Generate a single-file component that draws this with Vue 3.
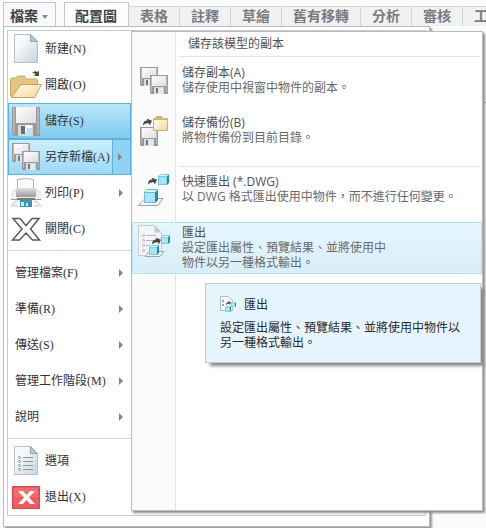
<template>
  <div class="page">
    <nav class="tabs">
      <button type="button" class="tab file-tab">檔案<span class="caret"></span></button>
      <button type="button" class="tab active-tab">配置圖</button>
      <button v-for="tab in tabs" :key="tab" type="button" class="tab">{{ tab }}</button>
    </nav>

    <div class="file-menu">
      <div class="menu-frame">
        <div class="main-menu">
          <template v-for="(group, index) in groups" :key="index">
            <hr v-if="index" class="menu-line" />
            <button
              v-for="item in group"
              :key="item.label"
              type="button"
              class="menu-item"
              :class="[item.state, { plain: !item.icon }]"
            >
              <svg v-if="item.icon" class="menu-icon" viewBox="0 0 32 32" aria-hidden="true">
                <use :href="'#' + item.icon" />
              </svg>
              <span class="menu-label">{{ item.label }}</span>
              <span v-if="item.more" class="more"><span class="arrow"></span></span>
            </button>
          </template>
        </div>
      </div>
    </div>

    <div class="side-panel"></div>

    <section class="submenu">
      <h2 class="submenu-title">儲存該模型的副本</h2>
      <button
        v-for="item in saveItems"
        :key="item.title"
        type="button"
        class="save-item"
        :class="item.state"
      >
        <svg class="save-icon" viewBox="0 0 32 32" aria-hidden="true"><use :href="'#' + item.icon" /></svg>
        <span class="save-text">
          <span class="save-title">{{ item.title }}</span>
          <span class="save-desc">{{ item.desc }}</span>
        </span>
      </button>
    </section>

    <div class="tooltip" role="tooltip">
      <div class="tooltip-head">
        <svg class="tooltip-icon" viewBox="0 0 16 16" aria-hidden="true"><use href="#export-small" /></svg>
        <span>匯出</span>
      </div>
      <p>設定匯出屬性、預覽結果、並將使用中物件以另一種格式輸出。</p>
    </div>

    <svg class="symbols" aria-hidden="true">
      <defs>
        <linearGradient id="paper" x1="0" y1="0" x2="1" y2="1">
          <stop offset="0.3" stop-color="#f7f9fa" /><stop offset="1" stop-color="#bfd5df" />
        </linearGradient>
        <linearGradient id="gold" x1="0" y1="0" x2="1" y2="1">
          <stop offset="0" stop-color="#fffdf3" /><stop offset="1" stop-color="#f4d794" />
        </linearGradient>
        <linearGradient id="steel" x1="0" y1="0" x2="0" y2="1">
          <stop offset="0" stop-color="#e2e2e2" /><stop offset="1" stop-color="#999" />
        </linearGradient>
        <linearGradient id="white" x1="0" y1="0" x2="1" y2="1">
          <stop offset="0" stop-color="#fff" /><stop offset="1" stop-color="#dedede" />
        </linearGradient>
      </defs>
      <symbol id="page" viewBox="0 0 32 32">
        <path d="M4.500 1.500h16l7 7v21h-23z" fill="url(#paper)" stroke="#b4c1c7" />
        <path d="M20.500 1.500v7h7z" fill="#b4c9d2" stroke="#90a5af" />
      </symbol>
      <symbol id="arrow" viewBox="0 0 10 8">
        <path d="M0 8C0 4 2 2 5 2.500L4 0l6 2.500L7.500 8 6.500 5.500C4 5 2 6 0 8z" fill="#484848" />
      </symbol>
      <symbol id="floppy" viewBox="0 0 28 29">
        <path d="M0 0h28v29H2l-2-2z" fill="#9a9a9a" />
        <path d="M1 1h2v26H1zM25 1h2v26h-2z" fill="#b3b3b3" />
        <path d="M4 0h20v16H4z" fill="url(#white)" />
        <path d="M6 18h15v11H6z" fill="#d9d9d9" />
        <path d="M9 19h4v8H9z" fill="#6b6b6b" />
        <path d="M13 18h7v10h-7z" fill="#f3fbff" />
        <path d="M15 21h5v7h-7z" fill="#bfe3f1" />
      </symbol>
      <symbol id="floppy-small" viewBox="0 0 18 19">
        <path d="M0 0h18v19H1l-1-1z" fill="#999" />
        <path d="M1 1h1v16H1zM16 1h1v16h-1z" fill="#bbb" />
        <path d="M2 1h14v10H2z" fill="url(#white)" />
        <path d="M4 12h10v7H4z" fill="#dcdcdc" />
        <path d="M6 13h2v5H6z" fill="#777" />
        <path d="M8 13h5v6H8z" fill="#d3edf7" />
      </symbol>
      <symbol id="folder" viewBox="0 0 32 32">
        <path d="M22 4q3-3 5-1l2-1v5h-5l1.500-2q-1-1-3.500-1z" fill="#484848" />
        <path d="M.5 27V11q0-2 2-2h3l2-2h7l2 3h9q2 0 2 2v7L9 28z" fill="#e4c584" stroke="#cba65d" />
        <path d="M11 15.500h20.500l-7 13H1.500z" fill="url(#gold)" stroke="#c7a158" />
      </symbol>
      <symbol id="save" viewBox="0 0 32 32"><use href="#floppy" x="2" y="2" width="28" height="29" /></symbol>
      <symbol id="copy" viewBox="0 0 32 32">
        <use href="#floppy-small" x="2" y="2" width="18" height="19" />
        <use href="#floppy-small" x="12" y="10" width="18" height="19" />
      </symbol>
      <symbol id="printer" viewBox="0 0 32 32">
        <path d="M7.500 2.500q8-2 16 0v11h-16z" fill="#fafafa" stroke="#b0b0b0" />
        <path d="M1 15l5-4h20l5 4v6H1z" fill="#e9e9e9" />
        <path d="M6 11h20v9H6z" fill="url(#steel)" />
        <path d="M1 15h5v5h20v-5h5v8H1z" fill="#f0f0f0" />
        <path d="M1 22h30v1H1z" fill="#999" />
        <path d="M7 21h18v2H7z" fill="#777" />
        <path d="M1 29l4-5h22l4 5z" fill="#f2f2f2" stroke="#ccc" />
        <path d="M8 23h16v8H8z" fill="#f9ffff" />
        <path d="M10 23h12v7H10z" fill="#3696b4" />
        <path d="M11 25h3v4h-3zM16 26h2v3h-2z" fill="#c4edf5" />
      </symbol>
      <symbol id="close" viewBox="0 0 32 32">
        <path d="M3 5.500h7l6 7 6-7h7L20.500 16 29.500 27h-7L16 20l-6.500 7h-7L12 16z" fill="#fff" stroke="#5c5c56" stroke-width="1.500" />
      </symbol>
      <symbol id="options" viewBox="0 0 32 32">
        <use href="#page" width="32" height="32" />
        <path d="M13 12.500h10M13 16.500h10M13 20.500h10M13 24.500h10" stroke="#8d989e" />
        <g fill="#fff" stroke="#829098">
          <circle cx="9.500" cy="12.500" r="1" /><circle cx="9.500" cy="16.500" r="1" />
          <circle cx="9.500" cy="20.500" r="1" /><circle cx="9.500" cy="24.500" r="1" />
        </g>
      </symbol>
      <symbol id="exit" viewBox="0 0 32 32">
        <path d="M2.500 5.500h27v22h-27z" fill="#f3595c" stroke="#c94b50" />
        <path d="M4 7h24v9H4z" fill="#f76b6d" />
        <path d="M8 10h5l3.500 4 3.500-4h5l-6 6.500L25 23h-5l-3.500-4-3.500 4H8l6-6.500z" fill="#fff" />
      </symbol>
      <symbol id="backup" viewBox="0 0 32 32">
        <use href="#floppy-small" x="2" y="12" width="18" height="19" />
        <use href="#arrow" x="5" y="3" width="9" height="8" />
        <path d="M15.500 15.500v-12h2l1-2h5l1 2h5v12z" fill="#d9b575" stroke="#cfb077" />
        <path d="M16 5h13v10H16z" fill="url(#gold)" />
      </symbol>
      <symbol id="cube" viewBox="0 0 14 14">
        <path d="M0 3l3-3h11v11l-3 3H0z" fill="#62bfdf" />
        <path d="M11 4l3-3v10l-3 3z" fill="#2187ac" />
        <path d="M1 4h10v9H1z" fill="#a6e6fb" />
        <path d="M1 3l2-2h10l-2 2z" fill="#d9f7ff" />
      </symbol>
      <symbol id="quick" viewBox="0 0 32 32">
        <path d="M.5 31.500L7 24.500h18l-5 7z" fill="#f8f8f8" stroke="#a0a0a0" />
        <use href="#cube" x="6" y="15" width="14" height="14" />
        <use href="#cube" x="20" y="0" width="11" height="11" />
        <use href="#arrow" x="10" y="3" width="9" height="8" />
      </symbol>
      <symbol id="export" viewBox="0 0 32 32">
        <path d="M.5.500h16l7 7v23H.5z" fill="#f3f5f6" stroke="#c9cdd0" />
        <path d="M16.500.5v7h7z" fill="#bdcbd2" />
        <path d="M8 10.500h10M8 15.500h7M8 20.500h4" stroke="#b1b7ba" />
        <g fill="#fff" stroke="#a0a8ac">
          <circle cx="5.500" cy="10.500" r="1" /><circle cx="5.500" cy="15.500" r="1" />
          <circle cx="5.500" cy="20.500" r="1" /><circle cx="5.500" cy="25.500" r="1" />
        </g>
        <path d="M7 31.500l4-5h15l-4 5z" fill="#f4f4f4" stroke="#a5a5a5" />
        <use href="#cube" x="11" y="20" width="10" height="10" />
        <use href="#cube" x="23" y="10" width="9" height="9" />
        <use href="#arrow" x="14" y="12" width="9" height="8" />
      </symbol>
      <symbol id="export-small" viewBox="0 0 16 16">
        <path d="M.5.500h8l4 4v10H.5z" fill="#f7f8f9" stroke="#b5babd" />
        <path d="M2 4h2v2H2zM2 8h2v2H2z" fill="#9aa0a4" />
        <use href="#arrow" x="6" y="5" width="5" height="4" />
        <use href="#cube" x="5" y="10" width="6" height="6" />
        <use href="#cube" x="11" y="6" width="5" height="5" />
      </symbol>
    </svg>
  </div>
</template>

<script setup>
const tabs = ['表格', '註釋', '草繪', '舊有移轉', '分析', '審核', '工']

const groups = [
  [
    { label: '新建(N)', icon: 'page' },
    { label: '開啟(O)', icon: 'folder' },
    { label: '儲存(S)', icon: 'save', state: 'selected' },
    { label: '另存新檔(A)', icon: 'copy', state: 'opened', more: true },
    { label: '列印(P)', icon: 'printer', more: true },
    { label: '關閉(C)', icon: 'close' }
  ],
  [
    { label: '管理檔案(F)', more: true },
    { label: '準備(R)', more: true },
    { label: '傳送(S)', more: true },
    { label: '管理工作階段(M)', more: true },
    { label: '說明', more: true }
  ],
  [
    { label: '選項', icon: 'options' },
    { label: '退出(X)', icon: 'exit' }
  ]
]

const saveItems = [
  { title: '儲存副本(A)', desc: '儲存使用中視窗中物件的副本。', icon: 'copy' },
  { title: '儲存備份(B)', desc: '將物件備份到目前目錄。', icon: 'backup' },
  { title: '快速匯出 (*.DWG)', desc: '以 DWG 格式匯出使用中物件，而不進行任何變更。', icon: 'quick', state: 'divided' },
  { title: '匯出', desc: '設定匯出屬性、預覽結果、並將使用中物件以另一種格式輸出。', icon: 'export', state: 'hovered' }
]
</script>

<style>
body { background: #fafcfc; }
</style>

<style scoped>
.page {
  position: relative;
  overflow: hidden;
  padding: 2px 0 4px 3px;
  font-family: "Open Sans", "Noto Sans CJK TC", sans-serif;
  font-size: 12px;
  color: #505050;
}
button { font: inherit; color: inherit; text-align: left; padding: 0; margin: 0; }
.tabs { display: flex; align-items: flex-end; height: 24px; overflow: hidden; }
.tab {
  flex: none;
  height: 20px;
  padding: 0 11px;
  border: solid #d4d5d7;
  border-width: 1px 1px 0 0;
  background: #f0f1f3;
  color: #7b7c80;
  font: bold 14px/17px "Liberation Sans", "Noto Sans CJK TC", sans-serif;
}
.file-tab, .active-tab {
  height: 24px;
  border-width: 1px 1px 0;
  border-color: #c4c6c8;
  background: #fff;
  color: #414348;
  line-height: 19px;
}
.file-tab {
  display: flex;
  align-items: center;
  gap: 4px;
  width: 53px;
  padding: 4px 6px 0;
  margin-right: 8px;
  background: #f8f9fa;
}
.caret { border: 3px solid transparent; border-top: 4px solid #85878a; border-bottom: 0; }
.active-tab { width: 65px; padding: 4px 10px 0; }

.file-menu {
  margin-right: 56px;
  padding: 3px 3px 10px;
  border: 1px solid #b6b8b9;
  background: #fff;
  box-shadow: 2px 2px 2px #999;
}
.menu-frame { border: 1px solid #c7c9ca; background: #f6fbff; }
.main-menu { width: 123px; background: #fff; }
.menu-item {
  display: flex;
  align-items: center;
  width: 100%;
  height: 36px;
  padding-left: 2px;
  border: 0;
  background: #fff;
  color: #333;
  font-family: "Liberation Serif", "Noto Sans CJK TC", serif;
}
.menu-icon { flex: none; width: 32px; height: 32px; margin-right: 3px; }
.plain { padding-left: 7px; }
.menu-label { padding-bottom: 2px; white-space: nowrap; }
.more {
  display: flex;
  align-items: center;
  align-self: stretch;
  width: 18px;
  margin-left: auto;
  padding-left: 6px;
  box-sizing: border-box;
}
.arrow { border: 4px solid transparent; border-left-color: #858585; border-right: 0; }
.selected, .opened { border: 1px solid #56b5e6; padding-left: 1px; }
.selected { background: linear-gradient(#b9e6fa, #7ecaef); }
.opened { background: linear-gradient(#cceefd, #9cd9f6); }
.opened .more { border-left: 1px solid #56b5e6; background: #91d2f2; padding-left: 5px; }
.menu-line { height: 1px; margin: 3px 0 4px; border: 0; background: #d5d5d5; }

/* strip of the window behind the menu */
.side-panel {
  position: absolute;
  top: 38px;
  right: 0;
  width: 4px;
  height: 64px;
  border-bottom: 1px solid #aaa;
  background: #f4f5f5;
}

.submenu {
  position: absolute;
  top: 31px;
  left: 131px;
  right: 3px;
  height: 480px;
  box-sizing: border-box;
  border: 1px solid #b9bbbd;
  background: linear-gradient(to right, #fbfbfb 43px, #e5e5e5 43px, #e5e5e5 44px, #fff 44px);
  box-shadow: 2px 2px 2px #909090;
}
.submenu-title {
  margin: 0 2px 0 46px;
  padding-left: 10px;
  border-bottom: 1px solid #e5e5e5;
  font-size: 12px;
  font-weight: normal;
  line-height: 24px;
}
.save-item {
  display: flex;
  align-items: flex-start;
  width: 100%;
  height: 50px;
  padding: 8px 0 0 6px;
  border: 0;
  background: none;
}
.save-icon { flex: none; width: 32px; height: 32px; }
.save-text { display: flex; flex-direction: column; width: 288px; margin-left: 12px; line-height: 15px; }
.save-desc { color: #696969; }
.divided {
  height: 56px;
  margin-top: 9px;
  background: linear-gradient(#e5e5e5, #e5e5e5) 46px 0 / 302px 1px no-repeat;
}
.hovered {
  height: 52px;
  padding: 2px 0 0 5px;
  border: 1px solid #b4e2f3;
  background: linear-gradient(#e6f6ff, #d8eef9);
}
.hovered .save-text { width: 210px; }

.tooltip {
  position: absolute;
  top: 283px;
  left: 205px;
  right: 5px;
  height: 80px;
  box-sizing: border-box;
  padding: 12px 14px;
  border: 1px solid #c4c9cc;
  background: #e6f5fd;
  box-shadow: 4px 4px 3px -1px #888;
  color: #292b31;
  line-height: 15px;
}
.tooltip-head { display: flex; align-items: center; gap: 8px; }
.tooltip-icon { width: 16px; height: 16px; }
.tooltip p { width: 244px; margin: 8px 0 0; }
.symbols { position: absolute; width: 0; height: 0; }
</style>
